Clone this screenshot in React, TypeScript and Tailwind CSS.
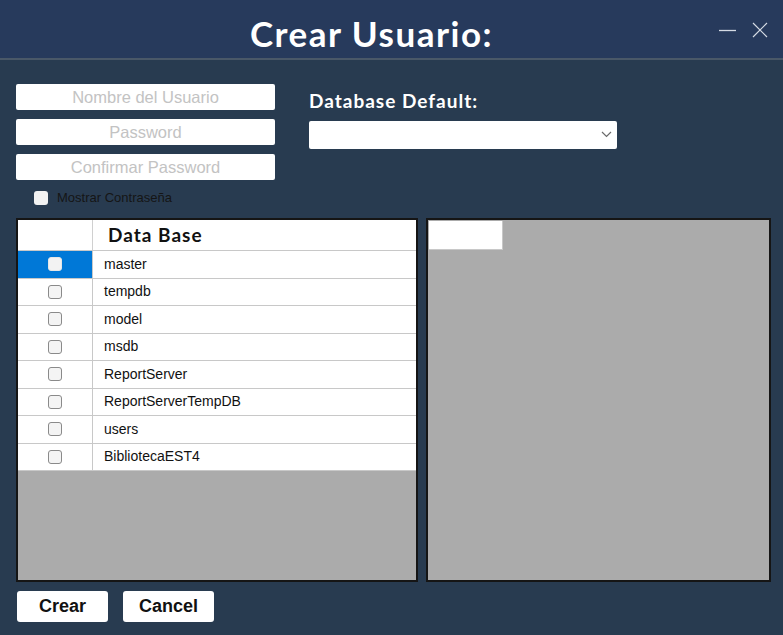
const databases = [
  "master",
  "tempdb",
  "model",
  "msdb",
  "ReportServer",
  "ReportServerTempDB",
  "users",
  "BibliotecaEST4",
];

function Check({ selected }: { selected?: boolean }) {
  return (
    <span
      className={
        "block h-[14px] w-[14px] rounded-[3px] border " +
        (selected ? "border-[#e6e6e6] bg-[#f3f3f3]" : "border-[#8a8a8a] bg-[#f4f4f4]")
      }
    />
  );
}

function TextBox({ placeholder }: { placeholder: string }) {
  return (
    <div className="flex h-[26px] items-center justify-center rounded-[2px] bg-white text-[16.5px] text-[#c3c3c3] [font-family:'Liberation_Sans',Arial,sans-serif]">
      {placeholder}
    </div>
  );
}

export default function App() {
  return (
    <div className="flex h-[635px] w-[783px] flex-col overflow-hidden bg-[#283b50]">
      {/* title bar */}
      <div className="relative flex h-[60px] shrink-0 items-center justify-center border-b-2 border-[#4a5868] bg-[#273a5c] pr-[40px]">
        <h1 className="pt-[8px] text-[35px] font-bold tracking-[1.5px] text-white [font-family:Lato,'Open_Sans',sans-serif]">
          Crear Usuario:
        </h1>
        <div className="absolute right-[15px] top-[22px] flex items-center gap-[15px]">
          <svg width="18" height="16" viewBox="0 0 18 16">
            <line x1="0" y1="8.5" x2="17" y2="8.5" stroke="#d5dbe4" strokeWidth="1.3" />
          </svg>
          <svg width="16" height="16" viewBox="0 0 16 16">
            <path d="M1 1 L15 15 M15 1 L1 15" stroke="#d5dbe4" strokeWidth="1.2" />
          </svg>
        </div>
      </div>

      <div className="flex flex-1 flex-col px-4 pt-6">
        {/* form area */}
        <div className="flex">
          <div className="flex w-[259px] shrink-0 flex-col">
            <div className="flex flex-col gap-[9px]">
              <TextBox placeholder="Nombre del Usuario" />
              <TextBox placeholder="Password" />
              <TextBox placeholder="Confirmar Password" />
            </div>
            <label className="ml-[18px] mt-[11px] flex h-[14px] items-center gap-[9px]">
              <span className="block h-[14px] w-[14px] rounded-[3px] bg-[#f2f2f2]" />
              <span className="text-[13px] tracking-[0px] text-[#151515] [font-family:'Liberation_Sans',Arial,sans-serif]">
                Mostrar Contraseña
              </span>
            </label>
          </div>
          <div className="ml-[34px] flex flex-col pt-[3px]">
            <div className="text-[19px] font-bold tracking-[1px] text-white [font-family:Lato,'Open_Sans',sans-serif]">
              Database Default:
            </div>
            <div className="mt-[5px] flex h-[28px] w-[308px] items-center justify-end rounded-[2px] bg-white pr-[5px]">
              <svg width="11" height="7" viewBox="0 0 11 7">
                <path d="M1 1 L5.5 5.5 L10 1" fill="none" stroke="#6b6b6b" strokeWidth="1.2" />
              </svg>
            </div>
          </div>
        </div>

        {/* grids */}
        <div className="mt-[13px] flex gap-[8px]">
          <div className="h-[364px] w-[402px] shrink-0 border-2 border-[#151515] bg-[#ababab]">
            <div className="flex h-[31px] border-b border-[#c8c8c8] bg-white">
              <div className="w-[75px] border-r border-[#d0d0d0]" />
              <div className="flex items-center pl-[15px] text-[19px] font-bold tracking-[1px] text-[#111] [font-family:Lato,'Open_Sans',sans-serif]">
                Data Base
              </div>
            </div>
            {databases.map((db, i) => (
              <div key={db} className="flex h-[27.5px] border-b border-[#c8c8c8] bg-white">
                <div
                  className={
                    "flex w-[75px] items-center justify-center border-r border-[#c8c8c8] " +
                    (i === 0 ? "bg-[#0078d7]" : "")
                  }
                >
                  <Check selected={i === 0} />
                </div>
                <div className="flex items-center pl-[11px] text-[14px] text-[#111] [font-family:'Liberation_Sans',Arial,sans-serif]">
                  {db}
                </div>
              </div>
            ))}
          </div>
          <div className="h-[364px] w-[345px] shrink-0 border-2 border-[#151515] bg-[#ababab] p-[1px]">
            <div className="h-[29px] w-[74px] border-b border-r border-[#c8c8c8] bg-white" />
          </div>
        </div>

        {/* buttons */}
        <div className="ml-[1px] mt-[9px] flex gap-[15px]">
          <button className="h-[31px] w-[91px] rounded-[3px] bg-white text-[18px] font-bold text-[#111] [font-family:'Liberation_Sans',Arial,sans-serif]">
            Crear
          </button>
          <button className="h-[31px] w-[91px] rounded-[3px] bg-white text-[18px] font-bold text-[#111] [font-family:'Liberation_Sans',Arial,sans-serif]">
            Cancel
          </button>
        </div>
      </div>
    </div>
  );
}
